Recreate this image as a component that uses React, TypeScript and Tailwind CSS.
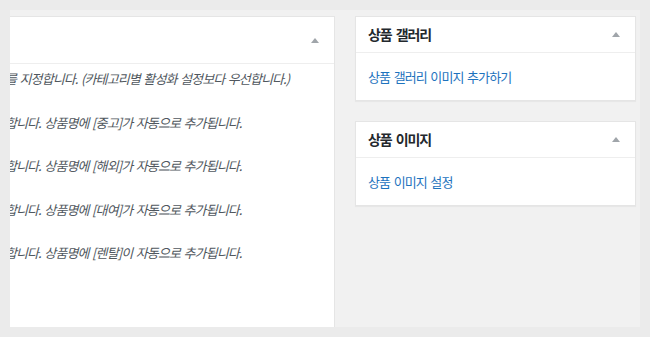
import React from "react";

const font = "font-['Noto_Sans_CJK_KR','Noto_Sans',sans-serif]";

const rows = [
  { label: "상품의 판매 상태를", text: " 지정합니다. (카테고리별 활성화 설정보다 우선합니다.)" },
  { label: "중고 상품으로 표시합", text: "니다. 상품명에 [중고]가 자동으로 추가됩니다." },
  { label: "해외 상품으로 표시합", text: "니다. 상품명에 [해외]가 자동으로 추가됩니다." },
  { label: "대여 상품으로 표시합", text: "니다. 상품명에 [대여]가 자동으로 추가됩니다." },
  { label: "렌탈 상품으로 표시합", text: "니다. 상품명에 [렌탈]이 자동으로 추가됩니다." },
];

const Toggle: React.FC = () => (
  <svg width="8" height="5" viewBox="0 0 8 5" aria-hidden="true" className="shrink-0">
    <polygon points="4,0 8,5 0,5" fill="#a0a5aa" />
  </svg>
);

const SideBox: React.FC<{ title: string; link: string }> = ({ title, link }) => (
  <div className="bg-white border border-[#e5e5e5] shadow-[0_1px_1px_rgba(0,0,0,0.04)]">
    <div className="h-[36px] flex items-center justify-between pl-[12px] pr-[15px] border-b border-[#eeeeee]">
      <h2 className="text-[14px] font-bold text-[#23282d] tracking-[-1.1px] [word-spacing:2px]">{title}</h2>
      <Toggle />
    </div>
    <div className="h-[47px] flex items-center px-[12px]">
      <a href="#" className="text-[13px] text-[#1e73be] tracking-[-0.9px] [word-spacing:1.5px]">
        {link}
      </a>
    </div>
  </div>
);

export default function App() {
  return (
    <div className={`w-[650px] h-[337px] bg-[#ebebeb] pt-[10px] pl-[10px] ${font}`}>
      <div className="w-[630px] h-[317px] bg-[#f1f1f1] overflow-hidden flex gap-[20px] pt-[6px]">
        <div className="w-[325px] shrink-0 bg-white border-t border-r border-[#e5e5e5] overflow-hidden">
          <div className="h-[47px] flex items-center justify-end pr-[15px] border-b border-[#eeeeee]">
            <Toggle />
          </div>
          <div className="flex flex-col gap-[23.5px] pt-[5px]">
            {rows.map((r) => (
              <div
                key={r.label}
                className="ml-[-134px] flex whitespace-nowrap leading-[20px] text-[13px] italic text-[#50575e] tracking-[-0.9px] [word-spacing:1.5px]"
              >
                <span className="w-[140px] shrink-0 text-right">{r.label}</span>
                <span className="whitespace-pre">{r.text}</span>
              </div>
            ))}
          </div>
        </div>
        <div className="w-[281px] shrink-0 flex flex-col gap-[20px]">
          <SideBox title="상품 갤러리" link="상품 갤러리 이미지 추가하기" />
          <SideBox title="상품 이미지" link="상품 이미지 설정" />
        </div>
      </div>
    </div>
  );
}
